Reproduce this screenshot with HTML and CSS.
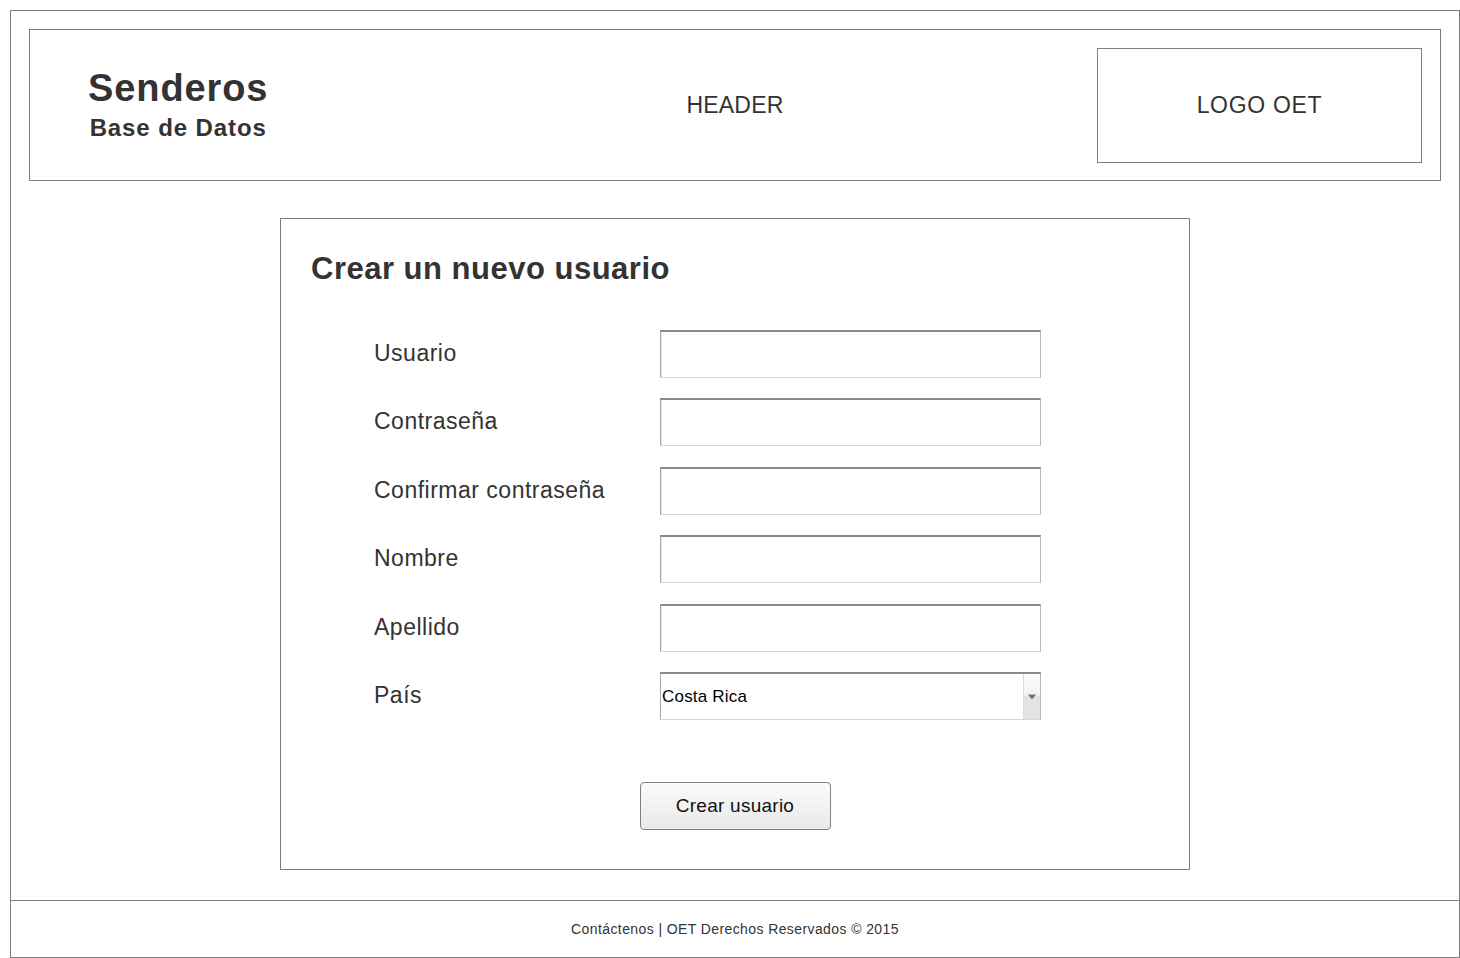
FILE: index.html
```html
<!DOCTYPE html>
<html lang="es">
<head>
<meta charset="utf-8">
<title>Senderos - Crear un nuevo usuario</title>
<link rel="stylesheet" href="styles.css">
</head>
<body>
<div class="page">
  <header class="header">
    <div class="brand">
      <div class="brand-title">Senderos</div>
      <div class="brand-sub">Base de Datos</div>
    </div>
    <div class="header-label">HEADER</div>
    <div class="logo">LOGO OET</div>
  </header>

  <main class="main">
    <section class="card">
      <h1 class="card-title">Crear un nuevo usuario</h1>
      <form class="form">
        <div class="fields">
          <label class="label" for="usuario">Usuario</label>
          <input class="field" id="usuario" type="text">

          <label class="label" for="pass">Contraseña</label>
          <input class="field" id="pass" type="password">

          <label class="label" for="pass2">Confirmar contraseña</label>
          <input class="field" id="pass2" type="password">

          <label class="label" for="nombre">Nombre</label>
          <input class="field" id="nombre" type="text">

          <label class="label" for="apellido">Apellido</label>
          <input class="field" id="apellido" type="text">

          <label class="label" for="pais">País</label>
          <div class="select-wrap">
            <select class="select" id="pais">
              <option>Costa Rica</option>
            </select>
            <span class="select-arrow"><svg width="10" height="6" viewBox="0 0 10 6"><path d="M1 0.5h8L5 5.5z" fill="#707070"/></svg></span>
          </div>
        </div>

        <div class="actions">
          <button class="btn" type="button">Crear usuario</button>
        </div>
      </form>
    </section>
  </main>

  <footer class="footer">Contáctenos | OET Derechos Reservados © 2015</footer>
</div>
</body>
</html>
```

FILE: styles.css
```css
* { box-sizing: border-box; }

html, body {
  margin: 0;
  padding: 0;
  background: #ffffff;
}

body {
  padding: 10px 0 0 10px;
  font-family: "Liberation Sans", Arial, sans-serif;
  color: #333333;
}

.page {
  width: 1450px;
  height: 948px;
  border: 1px solid #7f7f7f;
  display: flex;
  flex-direction: column;
}

/* Header */
.header {
  margin: 18px 18px 0 18px;
  height: 152px;
  border: 1px solid #7f7f7f;
  padding: 18px 18px 17px 18px;
  display: grid;
  grid-template-columns: 325px 1fr 325px;
  align-items: center;
}

.brand {
  justify-self: start;
  margin-left: 40px;
  margin-top: -2px;
  display: flex;
  flex-direction: column;
  align-items: center;
  font-weight: bold;
  color: #333333;
}

.brand-title {
  font-size: 38px;
  line-height: 40px;
  letter-spacing: 0.9px;
}

.brand-sub {
  margin-top: 6px;
  font-size: 24px;
  line-height: 28px;
  letter-spacing: 0.9px;
}

.header-label {
  text-align: center;
  font-size: 23px;
  line-height: 28px;
  letter-spacing: 0.2px;
  margin-top: -2px;
}

.logo {
  height: 115px;
  border: 1px solid #7f7f7f;
  display: flex;
  align-items: center;
  justify-content: center;
  font-size: 23px;
  letter-spacing: 0.7px;
}

/* Main */
.main {
  flex: 1;
  display: flex;
  justify-content: center;
  align-items: flex-start;
  padding-top: 37px;
}

.card {
  width: 910px;
  height: 652px;
  border: 1px solid #7f7f7f;
  padding: 33px 30px 0 30px;
}

.card-title {
  margin: 0;
  font-size: 31px;
  line-height: 34px;
  font-weight: bold;
  letter-spacing: 0.5px;
  color: #333333;
}

.form {
  margin-top: 44px;
}

.fields {
  padding-left: 63px;
  display: grid;
  grid-template-columns: 286px 381px;
  row-gap: 20.4px;
  align-items: center;
}

.label {
  font-size: 23px;
  line-height: 26px;
  letter-spacing: 0.5px;
  color: #333333;
  margin-top: -2px;
}

.field {
  display: block;
  width: 381px;
  height: 48px;
  margin: 0;
  padding: 0 4px;
  border-top: 2px solid #8a8a8a;
  border-left: 1px solid #a8a8a8;
  border-right: 1px solid #b8b8b8;
  border-bottom: 1px solid #d8d8d8;
  border-radius: 0;
  box-shadow: inset 1px 0 0 #e8e8e8;
  background: #ffffff;
  font-family: "Liberation Sans", Arial, sans-serif;
  font-size: 17px;
  outline: none;
}

.select-wrap {
  position: relative;
  width: 381px;
  height: 48px;
}

.select {
  display: block;
  width: 100%;
  height: 100%;
  margin: 0;
  padding: 0 0 0 1px;
  -webkit-appearance: none;
  appearance: none;
  border-top: 2px solid #8a8a8a;
  border-left: 1px solid #a8a8a8;
  border-right: 1px solid #b8b8b8;
  border-bottom: 1px solid #d8d8d8;
  border-radius: 0;
  background: #ffffff;
  color: #000000;
  font-family: "Liberation Sans", Arial, sans-serif;
  font-size: 17px;
  letter-spacing: 0.2px;
  outline: none;
}

.select-arrow {
  position: absolute;
  top: 2px;
  right: 1px;
  bottom: 1px;
  width: 17px;
  border-left: 1px solid #dcdcdc;
  background: linear-gradient(#fbfbfb 0%, #f4f4f4 45%, #e4e4e4 50%, #e2e2e2 100%);
  display: flex;
  align-items: center;
  justify-content: center;
  pointer-events: none;
}

.select-arrow svg { display: block; margin-top: 2px; }

.actions {
  display: flex;
  justify-content: center;
  margin-top: 62px;
}

.btn {
  width: 191px;
  height: 48px;
  border: 1px solid #7f7f7f;
  border-radius: 4px;
  background: linear-gradient(#fbfbfb, #e9e9e9);
  font-family: "Liberation Sans", Arial, sans-serif;
  font-size: 19px;
  letter-spacing: 0.25px;
  color: #111111;
  padding: 0;
}

/* Footer */
.footer {
  height: 57px;
  border-top: 1px solid #7f7f7f;
  display: flex;
  align-items: center;
  justify-content: center;
  font-size: 14px;
  letter-spacing: 0.4px;
  color: #333333;
}
```
